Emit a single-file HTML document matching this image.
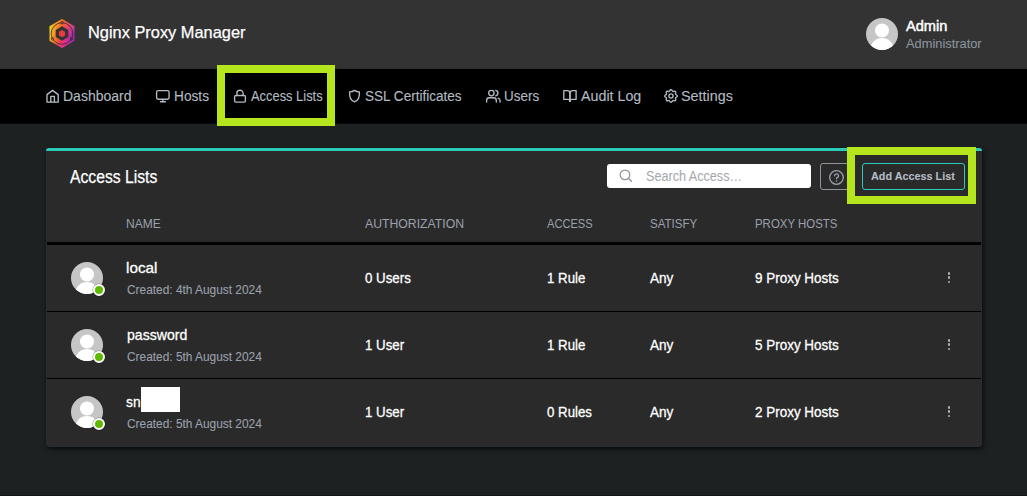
<!DOCTYPE html><html><head><meta charset='utf-8'><style>
html,body{margin:0;padding:0;}
body{width:1027px;height:496px;position:relative;overflow:hidden;background:#1e2122;font-family:"Liberation Sans",sans-serif;}
.t{position:absolute;white-space:nowrap;transform-origin:0 0;}
.ic{position:absolute;display:block;}
.r{position:absolute;}
.av{position:absolute;width:32px;height:32px;}
.av svg{display:block}
.dot{position:absolute;left:22.2px;top:21.9px;width:8px;height:8px;border-radius:50%;background:#5eba00;border:2px solid #fff;box-shadow:0 0 0 .6px rgba(0,0,0,.35)}
</style></head><body>
<div class='r' style='left:0;top:0;width:1027px;height:68px;background:#333333'></div>
<div class='r' style='left:0;top:68px;width:1027px;height:1px;background:#2b3036'></div>
<div class='r' style='left:0;top:69px;width:1027px;height:54px;background:#000'></div>
<div class='r' style='left:0;top:123px;width:1027px;height:1px;background:#05090d'></div>
<svg class='ic' style='left:48px;top:18px' width='28' height='31' viewBox='0 0 28 31'>
<defs>
<linearGradient id='lg' x1='0' y1='0.35' x2='1' y2='0.65'>
<stop offset='0' stop-color='#e8e02a'/><stop offset='0.22' stop-color='#f7951e'/><stop offset='0.45' stop-color='#ef4a3a'/><stop offset='0.65' stop-color='#e02f8a'/><stop offset='1' stop-color='#9a2cb0'/>
</linearGradient>
<linearGradient id='lg2' x1='0' y1='0' x2='0' y2='1'>
<stop offset='0' stop-color='#f7951e' stop-opacity='0.45'/><stop offset='0.5' stop-color='#f7951e' stop-opacity='0'/><stop offset='0.8' stop-color='#e0308f' stop-opacity='0'/><stop offset='1' stop-color='#e0308f' stop-opacity='0.5'/>
</linearGradient>
</defs>
<polygon points='14,1 26.5,8.2 26.5,22.8 14,30 1.5,22.8 1.5,8.2' fill='url(#lg)'/><polygon points='14,1 26.5,8.2 26.5,22.8 14,30 1.5,22.8 1.5,8.2' fill='url(#lg2)'/>
<circle cx='14' cy='15.5' r='10.8' fill='none' stroke='#3a2530' stroke-width='0.9' opacity='0.9'/>
<circle cx='14' cy='4.7' r='1.3' fill='none' stroke='#3a2a30' stroke-width='0.7'/>
<circle cx='4.6' cy='20.9' r='1.3' fill='none' stroke='#3a2a30' stroke-width='0.7'/>
<circle cx='23.4' cy='20.9' r='1.3' fill='#5a2a60' stroke='#3a2a30' stroke-width='0.7'/>
<polygon points='14,8.3 20.3,11.9 20.3,19.1 14,22.7 7.7,19.1 7.7,11.9' fill='#333'/>
<polygon points='14,12 17.1,13.8 17.1,17.4 14,19.2 10.9,17.4 10.9,13.8' fill='#ec3a40'/>
</svg>
<div class='t' style='left:88px;top:24px;font-size:17px;line-height:17px;font-weight:400;color:#ffffff;transform:scaleX(0.9632);-webkit-text-stroke:0.25px #ffffff'>Nginx Proxy Manager</div>
<div class='av' style='left:866px;top:18px'><svg width='32' height='32' viewBox='0 0 32 32'><defs><clipPath id='c'><circle cx='16' cy='16' r='16'/></clipPath></defs><circle cx='16' cy='16' r='16' fill='#c6c6c6'/><g clip-path='url(#c)' fill='#fff'><circle cx='16' cy='12.5' r='7'/><ellipse cx='16' cy='31' rx='11.5' ry='11'/></g></svg></div>
<div class='t' style='left:906.3px;top:18.8px;font-size:14px;line-height:14px;font-weight:400;color:#ffffff;transform:scaleX(1.0436);-webkit-text-stroke:0.45px #ffffff'>Admin</div>
<div class='t' style='left:906px;top:38px;font-size:12.5px;line-height:12.5px;font-weight:400;color:#8b939d;transform:scaleX(1.027);-webkit-text-stroke:0.1px #8b939d'>Administrator</div>
<div class='t' style='left:63px;top:88.7px;font-size:14px;line-height:14px;font-weight:400;color:#b4bbc3;transform:scaleX(1.0);-webkit-text-stroke:0.1px #b4bbc3'>Dashboard</div>
<div class='t' style='left:173.5px;top:88.7px;font-size:14px;line-height:14px;font-weight:400;color:#b4bbc3;transform:scaleX(0.9771);-webkit-text-stroke:0.1px #b4bbc3'>Hosts</div>
<div class='t' style='left:251.3px;top:88.7px;font-size:14px;line-height:14px;font-weight:400;color:#b4bbc3;transform:scaleX(0.9205);-webkit-text-stroke:0.1px #b4bbc3'>Access Lists</div>
<div class='t' style='left:364.9px;top:88.7px;font-size:14px;line-height:14px;font-weight:400;color:#b4bbc3;transform:scaleX(0.9677);-webkit-text-stroke:0.1px #b4bbc3'>SSL Certificates</div>
<div class='t' style='left:504px;top:88.7px;font-size:14px;line-height:14px;font-weight:400;color:#b4bbc3;transform:scaleX(0.96);-webkit-text-stroke:0.1px #b4bbc3'>Users</div>
<div class='t' style='left:580.6px;top:88.7px;font-size:14px;line-height:14px;font-weight:400;color:#b4bbc3;transform:scaleX(1.019);-webkit-text-stroke:0.1px #b4bbc3'>Audit Log</div>
<div class='t' style='left:681.3px;top:88.7px;font-size:14px;line-height:14px;font-weight:400;color:#b4bbc3;transform:scaleX(1.0245);-webkit-text-stroke:0.1px #b4bbc3'>Settings</div>
<svg class='ic' style='left:0;top:0' width='1027' height='130' fill='none' stroke='#b4bbc3' stroke-width='1.35' stroke-linecap='round' stroke-linejoin='round'>
<path d='M47 102.1 V94.6 L52.6 90.4 L58.2 94.6 V102.1 Z'/>
<path d='M50.8 102.1 V96.4 H54.4 V102.1'/>
<rect x='156.6' y='90.6' width='12.5' height='8.6' rx='1.6'/>
<path d='M162.85 99.3 V101.6 M160.4 101.7 H165.4'/>
<rect x='234.6' y='95.5' width='10.8' height='6.6' rx='1.3'/>
<path d='M236.9 95.5 V93.3 a3.1 3.1 0 0 1 6.2 0 V95.5'/>
<path d='M354.5 90.4 C356.2 91.5 357.6 91.9 359.3 91.8 C359.9 96.5 358.2 100.3 354.5 101.9 C350.8 100.3 349.1 96.5 349.7 91.8 C351.4 91.9 352.8 91.5 354.5 90.4 Z'/>
<circle cx='491.4' cy='93.1' r='2.7'/>
<path d='M486.6 102 V100.6 a2.8 2.8 0 0 1 2.8 -2.8 h4.1 a2.8 2.8 0 0 1 2.8 2.8 V102'/>
<path d='M495.7 90.4 a2.75 2.75 0 0 1 0 5.4'/>
<path d='M500.1 102 V100.8 a2.8 2.8 0 0 0 -2.0 -2.7'/>
<path d='M563.8 90.6 h3.3 a2.8 2.8 0 0 1 2.8 2.8 V101.4 a2 2 0 0 0 -2 -2 h-4.1 Z'/>
<path d='M576.1 90.6 h-3.3 a2.8 2.8 0 0 0 -2.8 2.8 V101.4 a2 2 0 0 1 2 -2 h4.1 Z'/>
<g transform='translate(662.6 87.6) scale(0.7)' stroke-width='1.93'><path d='M10.325 4.317c.426-1.756 2.924-1.756 3.35 0a1.724 1.724 0 0 0 2.573 1.066c1.543-.94 3.31.826 2.37 2.37a1.724 1.724 0 0 0 1.065 2.572c1.756.426 1.756 2.924 0 3.35a1.724 1.724 0 0 0-1.066 2.573c.94 1.543-.826 3.31-2.37 2.37a1.724 1.724 0 0 0-2.572 1.065c-.426 1.756-2.924 1.756-3.35 0a1.724 1.724 0 0 0-2.573-1.066c-1.543.94-3.31-.826-2.37-2.37a1.724 1.724 0 0 0-1.065-2.572c-1.756-.426-1.756-2.924 0-3.35a1.724 1.724 0 0 0 1.066-2.573c-.94-1.543.826-3.31 2.37-2.37 1 .608 2.296.07 2.572-1.065z'/><circle cx='12' cy='12' r='3'/></g>
</svg>
<div class='r' style='left:46px;top:148px;width:934px;height:297px;background:#2a2a2a;border:1px solid #272b33;border-radius:3px;box-shadow:1px 2px 5px rgba(0,0,0,.75)'></div>
<div class='r' style='left:46px;top:148px;width:936px;height:3px;background:#2bcbba;border-radius:3px 3px 0 0'></div>
<div class='t' style='left:70.2px;top:168px;font-size:18px;line-height:18px;font-weight:400;color:#ffffff;transform:scaleX(0.873);-webkit-text-stroke:0.25px #ffffff'>Access Lists</div>
<div class='r' style='left:607px;top:164px;width:204px;height:24px;background:#fff;border-radius:3px'></div>
<svg class='ic' style='left:0;top:0' width='1027' height='250' fill='none' stroke='#8c939b' stroke-width='1.2' stroke-linecap='round'><circle cx='625' cy='174.9' r='4.8'/><path d='M628.6 178.5 L631.5 181.3'/></svg>
<div class='t' style='left:645.8px;top:169px;font-size:14px;line-height:14px;font-weight:400;color:#a3a7ab;transform:scaleX(0.901);-webkit-text-stroke:0px #a3a7ab'>Search Access…</div>
<div class='r' style='left:820px;top:163px;width:31px;height:25px;border:1px solid #8e949b;border-radius:3px'></div>
<svg class='ic' style='left:0;top:0' width='1027' height='250' fill='none' stroke='#9aa0ac' stroke-width='1.3' stroke-linecap='round'><circle cx='836.5' cy='177.5' r='6.8'/><path d='M834.6 175.8 a1.95 1.95 0 1 1 2.6 1.85 c-.5 .2 -.7 .5 -.7 1 v.2'/><circle cx='836.5' cy='180.9' r='.75' fill='#9aa0ac' stroke='none'/></svg>
<div class='r' style='left:862px;top:163px;width:101px;height:25px;border:1px solid #2bcbba;border-radius:3px'></div>
<div class='t' style='left:871.2px;top:171.1px;font-size:11.5px;line-height:11.5px;font-weight:700;color:#b4bcc4;transform:scaleX(0.9416);-webkit-text-stroke:0.1px #b4bcc4'>Add Access List</div>
<div class='t' style='left:126.1px;top:216.9px;font-size:13px;line-height:13px;font-weight:400;color:#9aa0ac;transform:scaleX(0.9222);-webkit-text-stroke:0px #9aa0ac'>NAME</div>
<div class='t' style='left:364.7px;top:217px;font-size:13px;line-height:13px;font-weight:400;color:#9aa0ac;transform:scaleX(0.9413);-webkit-text-stroke:0px #9aa0ac'>AUTHORIZATION</div>
<div class='t' style='left:546.6px;top:217px;font-size:13px;line-height:13px;font-weight:400;color:#9aa0ac;transform:scaleX(0.8547);-webkit-text-stroke:0px #9aa0ac'>ACCESS</div>
<div class='t' style='left:649.8px;top:217px;font-size:13px;line-height:13px;font-weight:400;color:#9aa0ac;transform:scaleX(0.8885);-webkit-text-stroke:0px #9aa0ac'>SATISFY</div>
<div class='t' style='left:755.4px;top:217px;font-size:13px;line-height:13px;font-weight:400;color:#9aa0ac;transform:scaleX(0.8793);-webkit-text-stroke:0px #9aa0ac'>PROXY HOSTS</div>
<div class='r' style='left:47px;top:242px;width:934px;height:3px;background:#000'></div>
<div class='av' style='left:71px;top:262px'><svg width='32' height='32' viewBox='0 0 32 32'><defs><clipPath id='c'><circle cx='16' cy='16' r='16'/></clipPath></defs><circle cx='16' cy='16' r='16' fill='#c6c6c6'/><g clip-path='url(#c)' fill='#fff'><circle cx='16' cy='12.5' r='7'/><ellipse cx='16' cy='31' rx='11.5' ry='11'/></g></svg><div class='dot'></div></div>
<div class='t' style='left:126px;top:260px;font-size:15px;line-height:15px;font-weight:400;color:#ffffff;transform:scaleX(1.0172);-webkit-text-stroke:0.3px #ffffff'>local</div>
<div class='t' style='left:127px;top:283.7px;font-size:12px;line-height:12px;font-weight:400;color:#9aa0ac;transform:scaleX(0.9904);-webkit-text-stroke:0.1px #9aa0ac'>Created: 4th August 2024</div>
<div class='t' style='left:364.5px;top:271.4px;font-size:14.5px;line-height:14.5px;font-weight:400;color:#ffffff;transform:scaleX(0.918);-webkit-text-stroke:0.3px #ffffff'>0 Users</div>
<div class='t' style='left:546.8px;top:271.4px;font-size:14.5px;line-height:14.5px;font-weight:400;color:#ffffff;transform:scaleX(0.9146);-webkit-text-stroke:0.3px #ffffff'>1 Rule</div>
<div class='t' style='left:650.3px;top:271.4px;font-size:14.5px;line-height:14.5px;font-weight:400;color:#ffffff;transform:scaleX(0.936);-webkit-text-stroke:0.3px #ffffff'>Any</div>
<div class='t' style='left:755.3px;top:271.4px;font-size:14.5px;line-height:14.5px;font-weight:400;color:#ffffff;transform:scaleX(0.9278);-webkit-text-stroke:0.3px #ffffff'>9 Proxy Hosts</div>
<div class='r' style='left:947.6px;top:271.9px;width:2.7px;height:2.7px;border-radius:50%;background:#aeb2b7'></div>
<div class='r' style='left:947.6px;top:276.4px;width:2.7px;height:2.7px;border-radius:50%;background:#aeb2b7'></div>
<div class='r' style='left:947.6px;top:280.8px;width:2.7px;height:2.7px;border-radius:50%;background:#aeb2b7'></div>
<div class='r' style='left:47px;top:311px;width:934px;height:1px;background:#000'></div>
<div class='av' style='left:71px;top:329px'><svg width='32' height='32' viewBox='0 0 32 32'><defs><clipPath id='c'><circle cx='16' cy='16' r='16'/></clipPath></defs><circle cx='16' cy='16' r='16' fill='#c6c6c6'/><g clip-path='url(#c)' fill='#fff'><circle cx='16' cy='12.5' r='7'/><ellipse cx='16' cy='31' rx='11.5' ry='11'/></g></svg><div class='dot'></div></div>
<div class='t' style='left:126.5px;top:326.8px;font-size:15px;line-height:15px;font-weight:400;color:#ffffff;transform:scaleX(0.9397);-webkit-text-stroke:0.3px #ffffff'>password</div>
<div class='t' style='left:127px;top:350.7px;font-size:12px;line-height:12px;font-weight:400;color:#9aa0ac;transform:scaleX(0.9904);-webkit-text-stroke:0.1px #9aa0ac'>Created: 5th August 2024</div>
<div class='t' style='left:364.5px;top:338.4px;font-size:14.5px;line-height:14.5px;font-weight:400;color:#ffffff;transform:scaleX(0.918);-webkit-text-stroke:0.3px #ffffff'>1 User</div>
<div class='t' style='left:546.8px;top:338.4px;font-size:14.5px;line-height:14.5px;font-weight:400;color:#ffffff;transform:scaleX(0.9146);-webkit-text-stroke:0.3px #ffffff'>1 Rule</div>
<div class='t' style='left:650.3px;top:338.4px;font-size:14.5px;line-height:14.5px;font-weight:400;color:#ffffff;transform:scaleX(0.936);-webkit-text-stroke:0.3px #ffffff'>Any</div>
<div class='t' style='left:755.3px;top:338.4px;font-size:14.5px;line-height:14.5px;font-weight:400;color:#ffffff;transform:scaleX(0.9278);-webkit-text-stroke:0.3px #ffffff'>5 Proxy Hosts</div>
<div class='r' style='left:947.6px;top:338.9px;width:2.7px;height:2.7px;border-radius:50%;background:#aeb2b7'></div>
<div class='r' style='left:947.6px;top:343.4px;width:2.7px;height:2.7px;border-radius:50%;background:#aeb2b7'></div>
<div class='r' style='left:947.6px;top:347.8px;width:2.7px;height:2.7px;border-radius:50%;background:#aeb2b7'></div>
<div class='r' style='left:47px;top:378px;width:934px;height:1px;background:#000'></div>
<div class='av' style='left:71px;top:396px'><svg width='32' height='32' viewBox='0 0 32 32'><defs><clipPath id='c'><circle cx='16' cy='16' r='16'/></clipPath></defs><circle cx='16' cy='16' r='16' fill='#c6c6c6'/><g clip-path='url(#c)' fill='#fff'><circle cx='16' cy='12.5' r='7'/><ellipse cx='16' cy='31' rx='11.5' ry='11'/></g></svg><div class='dot'></div></div>
<div class='t' style='left:126.2px;top:394px;font-size:15px;line-height:15px;color:#fff;transform:scaleX(0.92);-webkit-text-stroke:0.3px #fff'>sn</div>
<div class='t' style='left:127px;top:417.7px;font-size:12px;line-height:12px;font-weight:400;color:#9aa0ac;transform:scaleX(0.9904);-webkit-text-stroke:0.1px #9aa0ac'>Created: 5th August 2024</div>
<div class='t' style='left:364.5px;top:405.4px;font-size:14.5px;line-height:14.5px;font-weight:400;color:#ffffff;transform:scaleX(0.918);-webkit-text-stroke:0.3px #ffffff'>1 User</div>
<div class='t' style='left:546.8px;top:405.4px;font-size:14.5px;line-height:14.5px;font-weight:400;color:#ffffff;transform:scaleX(0.9146);-webkit-text-stroke:0.3px #ffffff'>0 Rules</div>
<div class='t' style='left:650.3px;top:405.4px;font-size:14.5px;line-height:14.5px;font-weight:400;color:#ffffff;transform:scaleX(0.936);-webkit-text-stroke:0.3px #ffffff'>Any</div>
<div class='t' style='left:755.3px;top:405.4px;font-size:14.5px;line-height:14.5px;font-weight:400;color:#ffffff;transform:scaleX(0.9278);-webkit-text-stroke:0.3px #ffffff'>2 Proxy Hosts</div>
<div class='r' style='left:947.6px;top:405.9px;width:2.7px;height:2.7px;border-radius:50%;background:#aeb2b7'></div>
<div class='r' style='left:947.6px;top:410.4px;width:2.7px;height:2.7px;border-radius:50%;background:#aeb2b7'></div>
<div class='r' style='left:947.6px;top:414.8px;width:2.7px;height:2.7px;border-radius:50%;background:#aeb2b7'></div>
<div class='r' style='left:141px;top:387px;width:39px;height:25px;background:#fff'></div>
<div class='r' style='left:217px;top:65px;width:102px;height:45px;border:8px solid #b5e61d'></div>
<div class='r' style='left:847px;top:147px;width:113px;height:41px;border:8px solid #b5e61d'></div>
<div class='r' style='left:0;top:495px;width:1027px;height:1px;background:#131515'></div>
</body></html>
